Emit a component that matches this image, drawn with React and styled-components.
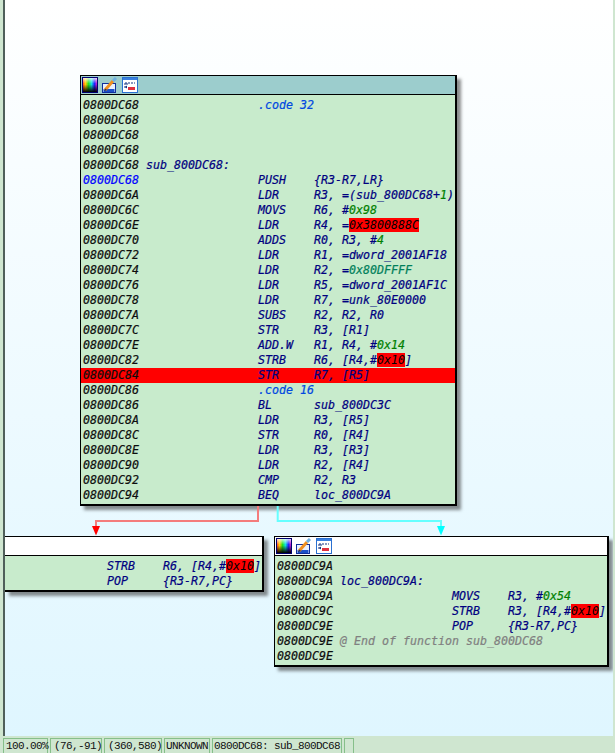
import React from 'react';
import styled, { createGlobalStyle } from 'styled-components';

const GlobalStyle = createGlobalStyle`
  html, body {
    margin: 0;
    padding: 0;
    overflow: hidden;
  }
`;

const Window = styled.div`
  width: 615px;
  height: 753px;
  display: flex;
  flex-direction: column;
  overflow: hidden;
  background: #cfe6d0;
`;

const Workspace = styled.div`
  height: 736px;
  display: flex;
  padding: 0 2px 0 3px;
`;

const Canvas = styled.div`
  position: relative;
  flex: 1;
  overflow: hidden;
  border-left: 2px solid #4f5f5a;
  background: linear-gradient(180deg, #ffffff 0%, #dff6ff 100%);
`;

const Node = styled.div`
  position: absolute;
  left: ${p => p.$left}px;
  top: ${p => p.$top}px;
  width: ${p => p.$width}px;
  box-sizing: border-box;
  border: 1px solid #000;
  border-left-width: ${p => (p.$open ? 0 : 1)}px;
  border-right-width: 2px;
  border-bottom-width: 2px;
  background: #c8ebcc;
  box-shadow: 4px 4px 3px rgba(50, 50, 50, 0.55);
  font-family: "DejaVu Sans Mono", monospace;
  font-size: 11.63px;
  font-style: italic;
  color: #000080;
  -webkit-text-stroke: 0.2px;
`;

const Header = styled.div`
  height: 18px;
  display: flex;
  align-items: center;
  gap: 4px;
  padding-left: 1px;
  border-bottom: 1px solid #000;
  background: ${p => (p.$active ? '#9ccdcd' : '#fff')};
`;

const Listing = styled.div`
  padding: 3px 0 1px ${p => p.$inset || 2}px;
`;

const Line = styled.div`
  height: 15px;
  line-height: 15px;
  white-space: pre;
  margin-left: -2px;
  padding-left: 2px;
  background: ${p => (p.$hit ? '#ff0000' : 'transparent')};
`;

const Addr = styled.span`
  color: ${p => (p.$current ? '#0000ff' : '#0c0c0c')};
`;

const Dir = styled.span`
  color: #0048e0;
`;

const Num = styled.span`
  color: #008000;
`;

const Ref = styled.span`
  color: #00805a;
`;

const Mark = styled.span`
  background: #ff0000;
  color: #000;
  -webkit-text-stroke: 0;
`;

const Note = styled.span`
  color: #808080;
`;

const Edges = styled.svg`
  position: absolute;
  left: 0;
  top: 0;
  width: 608px;
  height: 736px;
  pointer-events: none;
`;

const StatusBar = styled.div`
  flex: 1;
  display: flex;
  gap: 2px;
  padding: 2px 0 0 3px;
  overflow: hidden;
`;

const Cell = styled.div`
  width: ${p => p.$width}px;
  box-sizing: border-box;
  height: 15px;
  padding-left: ${p => p.$pad}px;
  border: 1px solid #86bf8a;
  border-bottom: none;
  font-family: "Liberation Mono", monospace;
  font-size: 11px;
  letter-spacing: -0.6px;
  line-height: 14px;
  white-space: pre;
  color: #111;
`;

const ColorIcon = () => (
  <svg width="16" height="16" viewBox="0 0 16 16">
    <defs>
      <linearGradient id="hue" x1="0" x2="1" y1="0" y2="0">
        <stop offset="0" stopColor="#ff3030" />
        <stop offset="0.2" stopColor="#ffd000" />
        <stop offset="0.4" stopColor="#20e020" />
        <stop offset="0.6" stopColor="#10e0e0" />
        <stop offset="0.8" stopColor="#2020ff" />
        <stop offset="1" stopColor="#ff20c0" />
      </linearGradient>
      <linearGradient id="shade" x1="0" x2="0" y1="0" y2="1">
        <stop offset="0" stopColor="#fff" stopOpacity="0.8" />
        <stop offset="0.4" stopColor="#fff" stopOpacity="0" />
        <stop offset="0.45" stopColor="#000" stopOpacity="0" />
        <stop offset="1" stopColor="#000" stopOpacity="1" />
      </linearGradient>
    </defs>
    <rect x="0.5" y="0.5" width="15" height="15" fill="url(#hue)" stroke="#000070" />
    <rect x="1" y="1" width="14" height="14" fill="url(#shade)" />
  </svg>
);

const PencilIcon = () => (
  <svg width="16" height="16" viewBox="0 0 16 16">
    <rect x="0.5" y="6.5" width="13" height="9" fill="#e8f0ff" stroke="#10309c" />
    <rect x="1.5" y="12" width="11" height="3" fill="#1c50c8" />
    <path d="M3 13 L11 4" stroke="#f09020" strokeWidth="3" />
    <path d="M11 4 L14 1" stroke="#70b0e0" strokeWidth="3" />
    <path d="M2 14 L3.5 11.5 L5 13 Z" fill="#203060" />
  </svg>
);

const GraphIcon = () => (
  <svg width="16" height="16" viewBox="0 0 16 16">
    <rect x="0.5" y="0.5" width="15" height="15" fill="#fff" stroke="#2a70d0" />
    <rect x="1" y="1" width="14" height="2" fill="#3a80e0" />
    <path d="M3 6 H13 M3 6 V11 M5 6 V8" stroke="#103080" fill="none" strokeDasharray="2 1" />
    <path d="M3 10 L5 8.5 V11.5 Z" fill="#103080" />
    <rect x="6" y="10" width="7" height="3" fill="#e03040" />
  </svg>
);

const NodeHeader = ({ active, bare }) => (
  <Header $active={active}>
    {!bare && (
      <>
        <ColorIcon />
        <PencilIcon />
        <GraphIcon />
      </>
    )}
  </Header>
);

const mainRows = [
  { addr: '0800DC68', text: <Dir>{'                 .code 32'}</Dir> },
  { addr: '0800DC68' },
  { addr: '0800DC68' },
  { addr: '0800DC68' },
  { addr: '0800DC68', text: ' sub_800DC68:' },
  { addr: '0800DC68', current: true, text: '                 PUSH    {R3-R7,LR}' },
  { addr: '0800DC6A', text: <>{'                 LDR     R3, =(sub_800DC68+'}<Num>1</Num>)</> },
  { addr: '0800DC6C', text: <>{'                 MOVS    R6, #'}<Num>0x98</Num></> },
  { addr: '0800DC6E', text: <>{'                 LDR     R4, ='}<Mark>0x3800888C</Mark></> },
  { addr: '0800DC70', text: <>{'                 ADDS    R0, R3, #'}<Num>4</Num></> },
  { addr: '0800DC72', text: '                 LDR     R1, =dword_2001AF18' },
  { addr: '0800DC74', text: <>{'                 LDR     R2, ='}<Ref>0x80DFFFF</Ref></> },
  { addr: '0800DC76', text: '                 LDR     R5, =dword_2001AF1C' },
  { addr: '0800DC78', text: '                 LDR     R7, =unk_80E0000' },
  { addr: '0800DC7A', text: '                 SUBS    R2, R2, R0' },
  { addr: '0800DC7C', text: '                 STR     R3, [R1]' },
  { addr: '0800DC7E', text: <>{'                 ADD.W   R1, R4, #'}<Num>0x14</Num></> },
  { addr: '0800DC82', text: <>{'                 STRB    R6, [R4,#'}<Mark>0x10</Mark>]</> },
  { addr: '0800DC84', hit: true, text: '                 STR     R7, [R5]' },
  { addr: '0800DC86', text: <Dir>{'                 .code 16'}</Dir> },
  { addr: '0800DC86', text: '                 BL      sub_800DC3C' },
  { addr: '0800DC8A', text: '                 LDR     R3, [R5]' },
  { addr: '0800DC8C', text: '                 STR     R0, [R4]' },
  { addr: '0800DC8E', text: '                 LDR     R3, [R3]' },
  { addr: '0800DC90', text: '                 LDR     R2, [R4]' },
  { addr: '0800DC92', text: '                 CMP     R2, R3' },
  { addr: '0800DC94', text: '                 BEQ     loc_800DC9A' },
];

// this block runs off the left side of the graph, its addresses are out of view
const leftRows = [
  { text: <>{'              STRB    R6, [R4,#'}<Mark>0x10</Mark>]</> },
  { text: '              POP     {R3-R7,PC}' },
];

const rightRows = [
  { addr: '0800DC9A' },
  { addr: '0800DC9A', text: ' loc_800DC9A:' },
  { addr: '0800DC9A', text: <>{'                 MOVS    R3, #'}<Num>0x54</Num></> },
  { addr: '0800DC9C', text: <>{'                 STRB    R3, [R4,#'}<Mark>0x10</Mark>]</> },
  { addr: '0800DC9E', text: '                 POP     {R3-R7,PC}' },
  { addr: '0800DC9E', text: <Note> @ End of function sub_800DC68</Note> },
  { addr: '0800DC9E' },
];

const Rows = ({ rows, inset }) => (
  <Listing $inset={inset}>
    {rows.map((r, i) => (
      <Line key={i} $hit={r.hit}>
        {r.addr && <Addr $current={r.current}>{r.addr}</Addr>}
        {r.text}
      </Line>
    ))}
  </Listing>
);

const statusCells = [
  [45, 2, '100.00%'],
  [52, 3, '(76,-91)'],
  [58, 3, '(360,580)'],
  [46, 1, 'UNKNOWN'],
  [130, 1, '0800DC68: sub_800DC68'],
  [10, 0, ''],
];

export default function App() {
  return (
    <Window>
      <GlobalStyle />
      <Workspace>
        <Canvas>
          <Node $left={75} $top={75} $width={377}>
            <NodeHeader active />
            <Rows rows={mainRows} />
          </Node>
          <Node $open $left={0} $top={536} $width={259}>
            <NodeHeader bare />
            <Rows rows={leftRows} inset={4} />
          </Node>
          <Node $left={269} $top={536} $width={335}>
            <NodeHeader />
            <Rows rows={rightRows} />
          </Node>
          <Edges viewBox="0 0 608 736">
            <path d="M253 506 V521 H91 V526" fill="none" stroke="#f47c7c" strokeWidth="2" />
            <path d="M87 526 H95 L91 535.500 Z" fill="#ff0000" />
            <path d="M272.700 506 V521 H436 V526" fill="none" stroke="#66ffff" strokeWidth="2" />
            <path d="M432 526 H440 L436 535.500 Z" fill="#00ffff" />
          </Edges>
        </Canvas>
      </Workspace>
      <StatusBar>
        {statusCells.map(([width, pad, label], i) => (
          <Cell key={i} $width={width} $pad={pad}>{label}</Cell>
        ))}
      </StatusBar>
    </Window>
  );
}
